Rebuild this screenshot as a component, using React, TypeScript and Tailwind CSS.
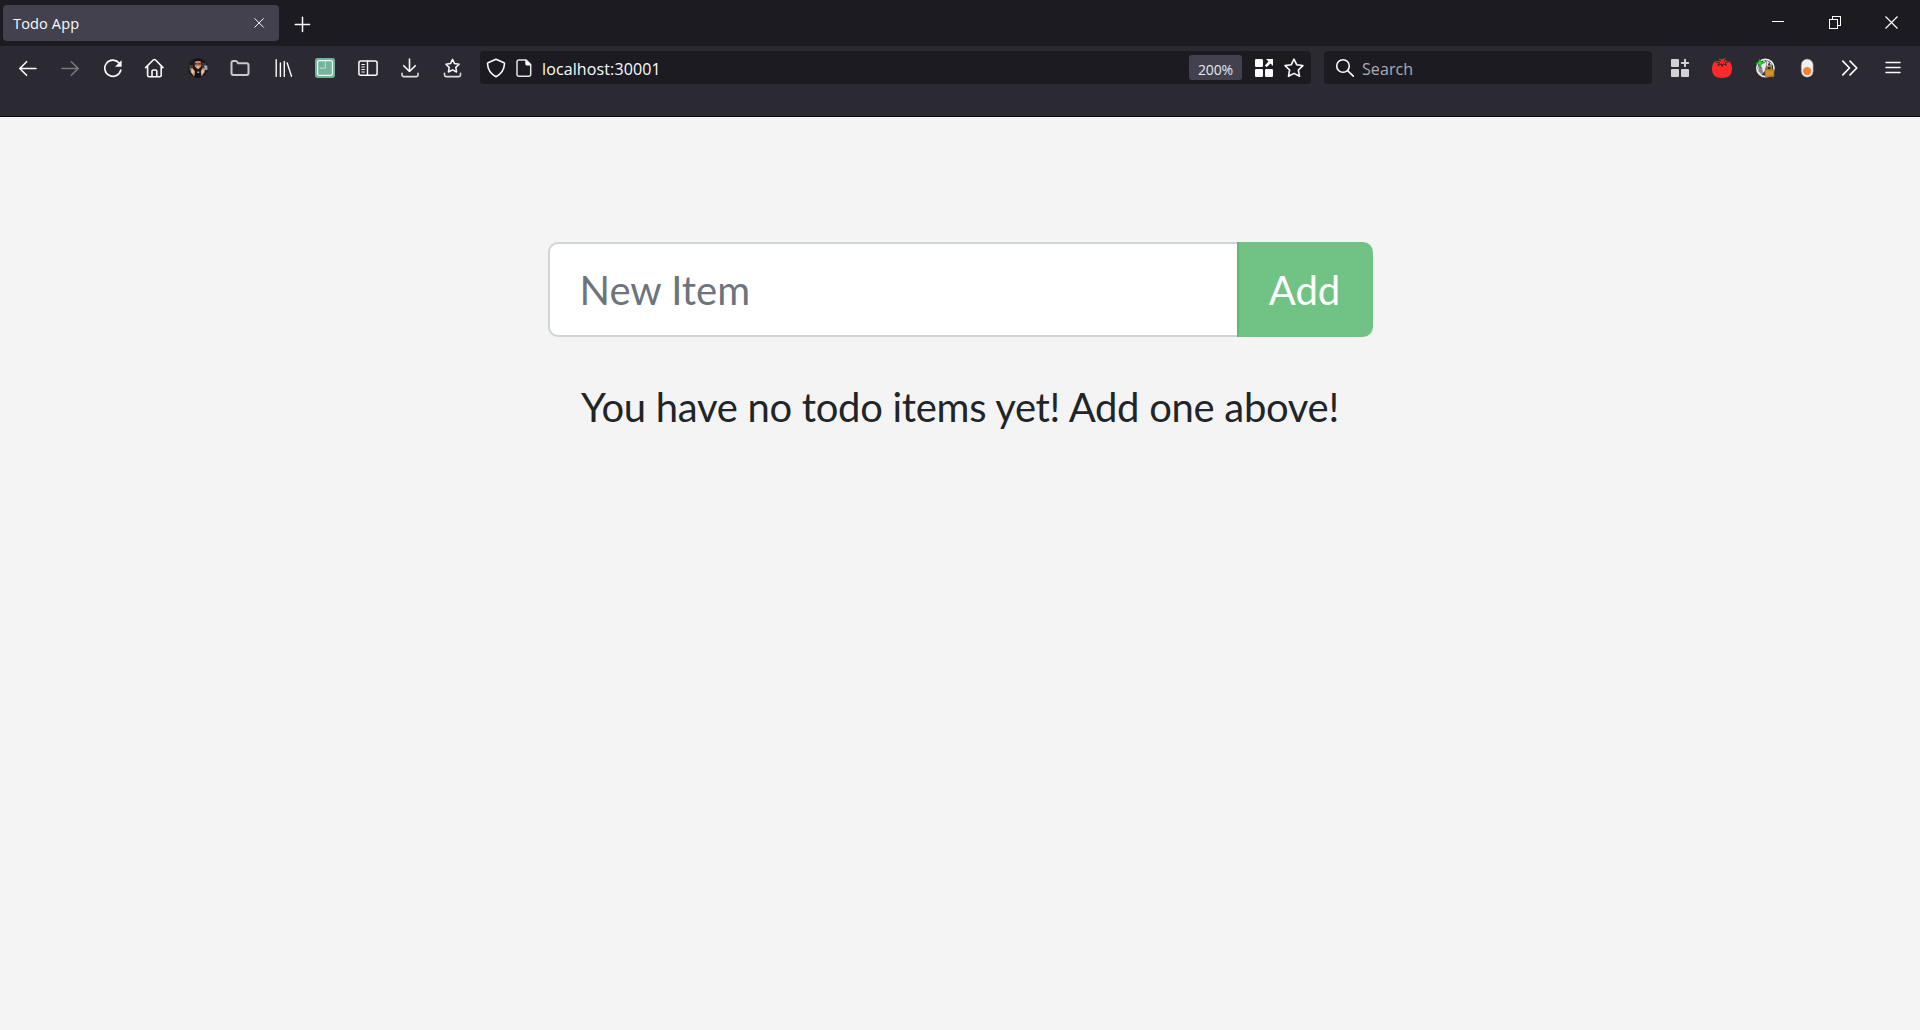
import React from "react";

type IconProps = { children: React.ReactNode; className?: string };

/** 20x20 icon frame; strokes use the current text colour. */
function Icon({ children, className = "text-[#fbfbfe]" }: IconProps) {
  return (
    <svg
      width="20"
      height="20"
      viewBox="0 0 20 20"
      fill="none"
      stroke="currentColor"
      strokeWidth="1.6"
      strokeLinecap="round"
      strokeLinejoin="round"
      className={"block shrink-0 " + className}
    >
      {children}
    </svg>
  );
}

function Tray() {
  return <path d="M2 15.3v1.7q0 1.6 1.6 1.6h12.8q1.6 0 1.6-1.6v-1.7" stroke="#dcdce0" />;
}

function TabStrip() {
  return (
    <div className="flex h-[46px] items-center bg-[#1c1b22] pl-[3px]">
      <div className="flex h-9 w-[276px] items-center justify-between rounded bg-[#42414d] pl-[10px] pr-[10px]">
        <span className="text-[14.6px] leading-5 tracking-[0.1px] text-[#fbfbfe]">Todo App</span>
        <Icon>
          <path d="M5.8 5.6l8.6 8.6M14.4 5.6l-8.6 8.6" strokeWidth="1" />
        </Icon>
      </div>
      <div className="ml-[13px] mt-px">
        <Icon>
          <path d="M10.5 3.2v14.2M3.3 10.4h14.3" strokeWidth="1.5" />
        </Icon>
      </div>
      <div className="ml-auto flex h-full w-[171px] items-center">
        <svg width="171" height="46" fill="none" stroke="#fff" strokeWidth="1" shapeRendering="crispEdges">
          <path d="M23 21.5h12" />
          <path d="M80.5 19.5h8v9h-8zM83.5 19.5v-3h8v9h-3" />
          <path d="M136.5 16.5l12 12M148.5 16.5l-12 12" strokeWidth="1.2" shapeRendering="auto" />
        </svg>
      </div>
    </div>
  );
}

function NavButtons() {
  return (
    <div className="grid w-[462px] shrink-0 grid-cols-[42px_43px_41px_44px_42px_44px_41px_43px_42px_42px_38px]">
      <Icon>
        <path d="M18 10.5H2M8.6 3.7L1.8 10.5l6.8 6.8" />
      </Icon>
      <Icon className="text-[#7a797f]">
        <path d="M2 10.5h16M11.4 3.7l6.8 6.8-6.8 6.8" />
      </Icon>
      <Icon>
        <path d="M17.8 12A8.1 8.1 0 1 1 16 4.9" />
        <path d="M18.6 2.2v6.6H12z" fill="currentColor" stroke="none" />
      </Icon>
      <Icon>
        <path d="M1.6 9.6L9.2 2q1.2-1 2.4 0l7.4 7.6M3.6 8.2v9q0 1.6 1.6 1.6h10.4q1.6 0 1.6-1.6v-9" />
        <path d="M8 18.5v-5.2q0-1.3 1.3-1.3h2.2q1.3 0 1.3 1.3v5.2" />
      </Icon>
      <Icon>
        <clipPath id="avatar">
          <circle cx="10" cy="10" r="10" />
        </clipPath>
        <g clipPath="url(#avatar)" stroke="none">
          <path d="M0 0h20v20H0z" fill="#1b1a1d" />
          <path d="M1 7h4v5H1zM14 5h4v5h-4z" fill="#3e373d" />
          <path d="M16 7.500h3.500v4.500h-2.500z" fill="#96adc7" />
          <path d="M2 10.500l2.500-.5 3 4-1.500 4.500-3-4zM17.500 10.500l-3-.5-2.500 4 1.500 4.500 3-4z" fill="#c98c69" />
          <path d="M4 11l2 2-1 3-2-2zM15 11.500l-2 2.500 1.500 2 1.500-3z" fill="#f4c7a8" />
          <path d="M6.800 3h6.400v5.500L10 11.500 6.800 8.500z" fill="#c98561" />
          <path d="M6 5q0-4.500 4-4.500T14 5L12 3H8z" fill="#17120f" />
          <path d="M7 5.300h2.600v1.300H7zM10.400 5.300H13v1.300h-2.600z" fill="#282025" />
          <path d="M8.600 8.600h2.800v1H8.600z" fill="#f6ddd0" />
          <path d="M7.200 11.500l2.800 1 2.800-1 .2 8.500H7z" fill="#101114" />
          <path d="M9.200 13.500h2v1.500h-2z" fill="#90b5c1" />
        </g>
      </Icon>
      <Icon className="text-[#c9c9cb]">
        <path d="M1.500 15V5q0-1.900 1.900-1.900h2.400q1 0 1.500 1l.7 1.200h8.600q1.900 0 1.900 1.900V15q0 1.900-1.900 1.900H3.400Q1.500 16.900 1.500 15z" strokeWidth="2" />
      </Icon>
      <Icon>
        <path d="M2.200 1.600v16.800M6.400 5v13.4M10.300 3.400v15M13.200 5l4.300 13.200" strokeWidth="1.4" />
      </Icon>
      <Icon>
        <rect width="20" height="20" rx="2.4" fill="#74b49d" stroke="none" />
        <rect x="2.600" y="2.600" width="14.800" height="14.800" rx="1.600" stroke="#eef8f4" strokeWidth="1.200" />
        <path d="M10.300 4v6.200H4.800" stroke="#bde0d2" strokeWidth="1" />
      </Icon>
      <Icon>
        <rect x="0.900" y="2.900" width="18.200" height="14.400" rx="2" strokeWidth="1.500" />
        <path d="M9.500 3v14" strokeWidth="1.400" />
        <path d="M3.800 6.500h2.600M3.800 9h2.600M3.800 11.500h2.600M3.800 14h2.600" strokeWidth="1" />
      </Icon>
      <Icon>
        <path d="M9.500 1v12.400M3.700 7.700l5.800 5.800 5.800-5.800" />
        <Tray />
      </Icon>
      <Icon>
        <path d="M10.500 1.400l2 4.200 4.600.6-3.300 3.200.8 4.600-4.100-2.200L6.400 14l.8-4.600-3.300-3.200 4.600-.6z" strokeWidth="1.500" />
        <path d="M2.500 15.300v1.700q0 1.600 1.600 1.600h12.800q1.600 0 1.600-1.600v-1.700" stroke="#dcdce0" />
      </Icon>
    </div>
  );
}

function AddressBar() {
  return (
    <div className="flex h-[33px] w-[831px] shrink-0 items-center rounded bg-[#1c1b22] pl-[6px] pr-[7px]">
      <Icon>
        <path d="M10 1.300l8 3.400q.6.300.5 1-.4 8.600-8.500 13Q1.900 14.300 1.500 5.700q0-.7.5-1z" />
      </Icon>
      <Icon className="ml-2 text-[#e4e4e8]">
        <path d="M5 2h7.200l4.500 4.500v9.700q0 2-2 2H5q-2 0-2-2V4q0-2 2-2z" strokeWidth="1.500" />
        <path d="M11.300 1.400l6 6h-4.600q-1.400 0-1.400-1.400z" fill="#fbfbfe" stroke="none" />
      </Icon>
      <span className="ml-[8px] mt-[2px] text-[16px] leading-5 tracking-[0.12px] text-[#fbfbfe]">localhost:30001</span>
      <span className="ml-auto flex h-[25px] w-[53px] items-center justify-center rounded-[3px] bg-[#42414d] pt-[3px] text-[14px] tracking-[-0.15px] text-[#e8e8ed]">
        200%
      </span>
      <Icon className="ml-[12px] text-[#fbfbfe]">
        <g fill="currentColor" stroke="none">
          <rect x="1" y="1" width="8" height="8" rx="1.300" />
          <rect x="1" y="11" width="8" height="8" rx="1.300" />
          <rect x="11" y="11" width="8" height="8" rx="1.300" />
          <path d="M12 1h7v7l-2.500-2.500L12.700 9.300 10.800 7.400l3.700-3.800z" />
        </g>
      </Icon>
      <Icon className="ml-[10px] text-[#fbfbfe]">
        <path d="M10 1.200l2.700 5.500 6.200.9-4.500 4.400 1.100 6.300L10 15.400l-5.500 2.900L5.600 12 1.100 7.600l6.200-.9z" />
      </Icon>
    </div>
  );
}

function SearchBar() {
  return (
    <div className="ml-[13px] flex h-[33px] w-[328px] shrink-0 items-center rounded bg-[#1c1b22] pl-[11px]">
      <Icon>
        <circle cx="8" cy="8" r="6.300" />
        <path d="M12.600 12.600l5.700 5.500" />
      </Icon>
      <span className="ml-[7px] mt-[2px] text-[16px] leading-5 tracking-[0.1px] text-[#acacb2]">Search</span>
    </div>
  );
}

function Extensions() {
  return (
    <div className="ml-[18px] grid grid-cols-[42px_43px_42px_43px_43px_20px]">
      <Icon className="text-[#d2d1d5]">
        <g fill="currentColor" stroke="none">
          <rect x="1" y="1" width="8" height="8" rx="1" />
          <rect x="1" y="11" width="8" height="8" rx="1" />
          <rect x="11" y="11" width="8" height="8" rx="1" />
        </g>
        <path d="M15 1.800v6.400M11.800 5h6.400" strokeWidth="2" />
      </Icon>
      <Icon>
        <path d="M3.200 3.200L8 2.600 6.500.6l3.200 1L13.500 0l-.4 2.200 4 1.200Q20 5.500 20 11.200 20 20 10 20T0 11.200Q0 5.500 3.200 3.200z" fill="#ff2a2a" stroke="none" />
        <path d="M4 4.200l3.600.1-1.700 3.300 3.500-1.800.7 2.900.9-2.900 3.400 1.500-1.200-2.700 3.300-.8M5.800 1.800l3.300 1.300M13 1.700l-1.200 1.900" stroke="#4a1a22" strokeWidth="1" />
      </Icon>
      <Icon>
        <circle cx="10.400" cy="10" r="8.600" fill="#303136" stroke="#f2f2f2" strokeWidth="1.600" />
        <path d="M9 2.500q3 1 2 5.500l-1 5-4 4Q2 14 3 9z" fill="#e9eaec" stroke="none" />
        <path d="M3.500 8.500l3.500.5 1 6-2 1-2.500-3z" fill="#85868b" stroke="none" />
        <path d="M11.500 2.500l5 3v3h-5z" fill="#e9eaec" stroke="none" />
        <path d="M13 6l1.500-2L16 8h-3z" fill="#44454a" stroke="none" />
        <path d="M4.600 0l1.200 3.400 4.200 1.200-3.700 1.300L5.200 9.800 3.900 6.500 0 5.300l3.500-1.600z" fill="#11ee18" stroke="#073708" strokeWidth=".4" />
        <path d="M12 12V9.900q0-2 2.200-2t2.200 2V12" stroke="#b9853c" strokeWidth="1.400" />
        <rect x="10" y="11.300" width="9" height="7.500" rx=".7" fill="#cb8727" stroke="#9c691f" strokeWidth=".6" />
        <path d="M11.500 14h6M11.500 16h6" stroke="#e2a450" strokeWidth=".7" />
      </Icon>
      <Icon>
        <rect x="4.200" y="1" width="12" height="18.200" rx="6" fill="#f0f0f0" stroke="#77777b" strokeWidth=".5" />
        <circle cx="10.200" cy="13.100" r="4.200" fill="#f58233" stroke="none" />
      </Icon>
      <Icon>
        <path d="M2.800 3.200L9.500 10l-6.700 6.800M10 3.200l6.800 6.800L10 16.800" strokeWidth="1.700" />
      </Icon>
      <Icon>
        <path d="M3 4.500h14M3 9.500h14M3 14.500h14" strokeWidth="1.500" />
      </Icon>
    </div>
  );
}

export default function App() {
  return (
    <div className="flex h-[1030px] w-[1920px] flex-col overflow-hidden bg-[#f4f4f4] font-['Open_Sans',sans-serif]">
      <TabStrip />
      <div className="flex h-[71px] items-start border-b border-[#0c0c0d] bg-[#2b2a33] pt-[5px]">
        <div className="flex h-[33px] items-center pl-[18px]">
          <NavButtons />
          <AddressBar />
          <SearchBar />
          <Extensions />
        </div>
      </div>
      <main className="mx-auto w-[825px] pt-[125px] font-[Lato,sans-serif] text-[40px] leading-[60px]">
        <form className="flex h-[95px]" onSubmit={(e) => e.preventDefault()}>
          <input
            placeholder="New Item"
            aria-label="New Item"
            className="w-[689px] rounded-l-[10px] border-2 border-r-0 border-[#ced4da] bg-white px-[30px] text-[#212529] outline-none placeholder:text-[#6c757d] placeholder:opacity-100"
          />
          <button className="w-[136px] rounded-r-[10px] border-l-2 border-[#5cb874] bg-[#71c285] pr-[2px] text-white">Add</button>
        </form>
        <p className="mt-[40px] text-center tracking-[-0.3px] text-[#212529]">You have no todo items yet! Add one above!</p>
      </main>
    </div>
  );
}
